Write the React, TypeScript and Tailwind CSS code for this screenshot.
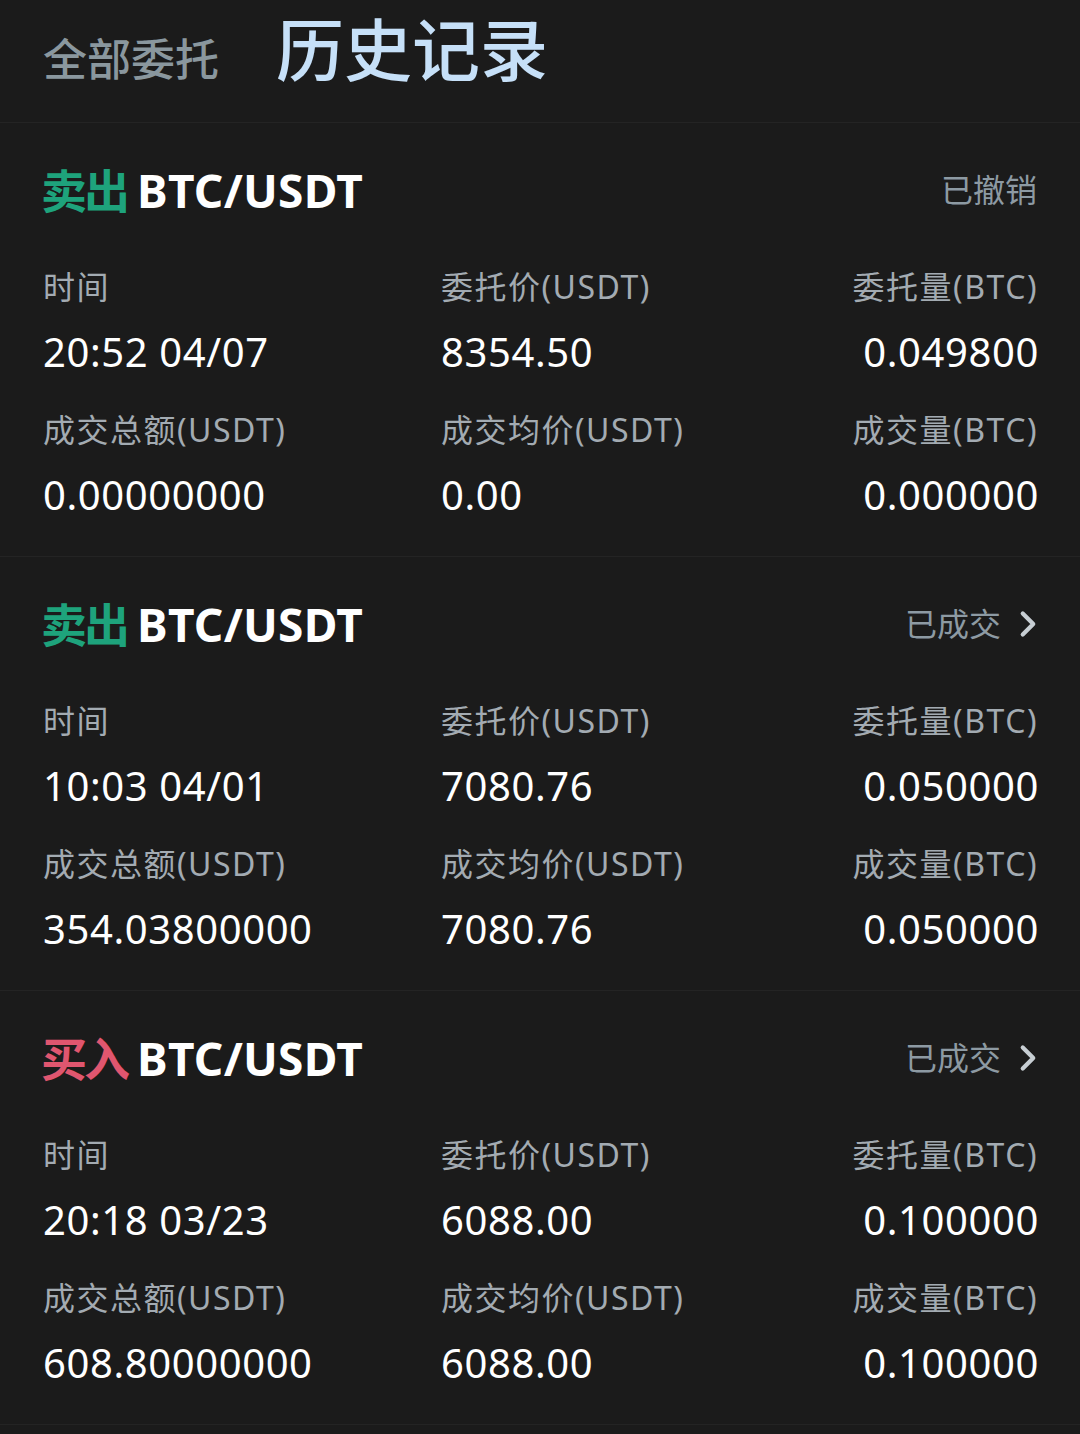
import {ChevronRight} from 'lucide-react';

type Order = {
    side: 'sell' | 'buy',
    status: string,
    arrow: boolean,
    time: string,
    price: string,
    amount: string,
    total: string,
    avg: string,
    filled: string
}

const orders: Order[] = [
    {side: 'sell', status: '已撤销', arrow: false, time: '20:52 04/07', price: '8354.50', amount: '0.049800', total: '0.00000000', avg: '0.00', filled: '0.000000'},
    {side: 'sell', status: '已成交', arrow: true, time: '10:03 04/01', price: '7080.76', amount: '0.050000', total: '354.03800000', avg: '7080.76', filled: '0.050000'},
    {side: 'buy', status: '已成交', arrow: true, time: '20:18 03/23', price: '6088.00', amount: '0.100000', total: '608.80000000', avg: '6088.00', filled: '0.100000'},
];

const font = "font-['Noto_Sans','Noto_Sans_CJK_SC',sans-serif]";

const Card = ({o}: {o: Order}) => {
    return (
        <div className="px-[43px] pt-[40px] pb-[36px] border-b border-[#242424]">
            <div className="flex items-center justify-between h-[54px]">
                <div className="flex items-center text-[46px] font-bold leading-none">
                    <span className={o.side === 'sell' ? 'text-[#1ea37c] tracking-[-3px] ml-[-2px]' : 'text-[#e0566f] tracking-[-3px] ml-[-2px]'}>
                        {o.side === 'sell' ? '卖出' : '买入'}
                    </span>
                    <span className="text-white ml-[10px] tracking-[0.3px]">BTC/USDT</span>
                </div>
                <div className="flex items-center text-[32px] text-[#8d9aa3]">
                    <span>{o.status}</span>
                    {o.arrow && <ChevronRight className="w-[42px] h-[42px] ml-[6px] mr-[-12px] text-[#c7ced3]" strokeWidth={2.4} />}
                </div>
            </div>
            <div className="grid grid-cols-[398px_1fr_1fr] mt-[48px]">
                <div className="text-[32px] leading-[44px] text-[#a3abb2] tracking-[1.5px]">时间</div>
                <div className="text-[32px] leading-[44px] text-[#a3abb2] tracking-[1.5px]">委托价(USDT)</div>
                <div className="text-[32px] leading-[44px] text-[#a3abb2] tracking-[1.5px] text-right mr-[-1px]">委托量(BTC)</div>

                <div className="text-[40px] leading-[50px] text-white mt-[18px] tracking-[0.6px]">{o.time}</div>
                <div className="text-[40px] leading-[50px] text-white mt-[18px] tracking-[0.6px]">{o.price}</div>
                <div className="text-[40px] leading-[50px] text-white mt-[18px] tracking-[0.6px] text-right mr-[-2px]">{o.amount}</div>

                <div className="text-[32px] leading-[44px] text-[#a3abb2] mt-[31px] tracking-[1.5px]">成交总额(USDT)</div>
                <div className="text-[32px] leading-[44px] text-[#a3abb2] mt-[31px] tracking-[1.5px]">成交均价(USDT)</div>
                <div className="text-[32px] leading-[44px] text-[#a3abb2] mt-[31px] tracking-[1.5px] text-right mr-[-1px]">成交量(BTC)</div>

                <div className="text-[40px] leading-[50px] text-white mt-[18px] tracking-[0.6px]">{o.total}</div>
                <div className="text-[40px] leading-[50px] text-white mt-[18px] tracking-[0.6px]">{o.avg}</div>
                <div className="text-[40px] leading-[50px] text-white mt-[18px] tracking-[0.6px] text-right mr-[-2px]">{o.filled}</div>
            </div>
        </div>
    );
};

const App = () => {
    return (
        <div className={`w-[1080px] min-h-[1434px] bg-[#1b1b1b] ${font}`}>
            <div className="h-[123px] border-b border-[#242424] flex items-center px-[43px] gap-[57px] pb-[22px]">
                <span className="text-[44px] text-[#8a979e] font-medium mt-[18px]">全部委托</span>
                <span className="text-[68px] text-[#c6e0f8] font-medium">历史记录</span>
            </div>
            {orders.map((o, i) => (
                <Card key={i} o={o} />
            ))}
        </div>
    );
};

export default App;
